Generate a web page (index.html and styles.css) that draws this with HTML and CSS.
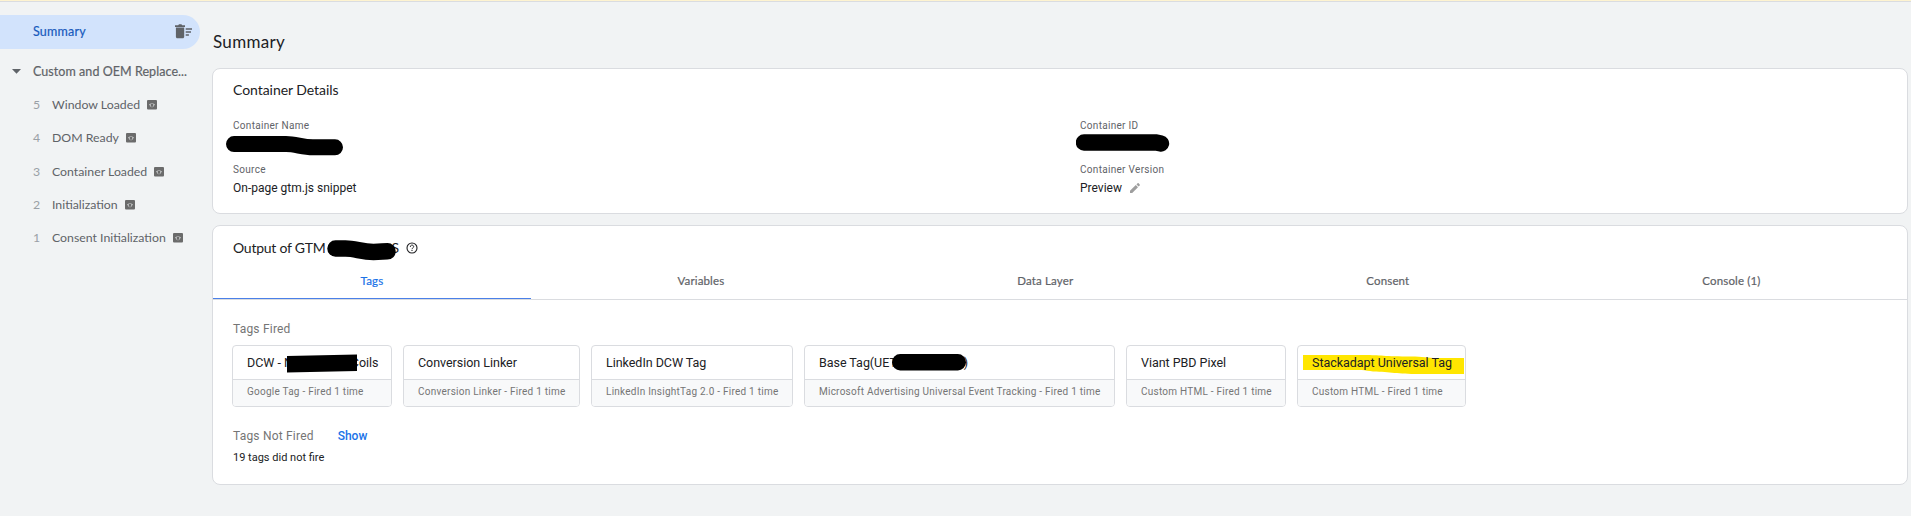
FILE: index.html
```
<!DOCTYPE html>
<html lang="en">
<head>
    <meta charset="UTF-8">
    <meta name="viewport" content="width=device-width, initial-scale=1.0">
    <title>Tag Assistant</title>
    <link rel="stylesheet" href="styles.css">
</head>
<body>
    <svg class="sprite" width="0" height="0">
        <symbol id="code" viewBox="0 0 10 10">
            <rect width="10" height="9.6" rx="1" fill="#6b6b6b"/>
            <path d="M4.3 3.3 2.6 5l1.7 1.7M5.7 3.3 7.4 5 5.7 6.7" fill="none" stroke="#f1f3f4" stroke-width="0.9"/>
        </symbol>
    </svg>

    <div class="topbar"></div>
    <div class="layout">
        <nav class="sidebar">
            <div class="summary-item">
                <span>Summary</span>
                <svg class="trash" width="18" height="15" viewBox="0 0 18 15">
                    <path d="M0 1.3h3.2L4 .3h2.4l.8 1H10v1.6H0zM.9 3.6h8.3v9.1c0 .9-.6 1.5-1.5 1.5H2.4c-.9 0-1.5-.6-1.5-1.5zM10.7 4.3h6.3v1.5h-6.3zM10.7 7.2h5.3v1.5h-5.3zM10.7 10.2h3.2v1.5h-3.2z" fill="#5f6368"/>
                </svg>
            </div>
            <div class="group">
                <svg class="caret" width="9" height="5" viewBox="0 0 9 5"><path d="M0 0h9L4.5 4.7z" fill="#5f6368"/></svg>
                <span>Custom and OEM Replace...</span>
            </div>
            <ul class="events">
                <li><span class="num">5</span><span class="label">Window Loaded</span><svg class="code"><use href="#code"/></svg></li>
                <li><span class="num">4</span><span class="label">DOM Ready</span><svg class="code"><use href="#code"/></svg></li>
                <li><span class="num">3</span><span class="label">Container Loaded</span><svg class="code"><use href="#code"/></svg></li>
                <li><span class="num">2</span><span class="label">Initialization</span><svg class="code"><use href="#code"/></svg></li>
                <li><span class="num">1</span><span class="label">Consent Initialization</span><svg class="code"><use href="#code"/></svg></li>
            </ul>
        </nav>

        <main class="content">
            <h1>Summary</h1>

            <section class="card details">
                <h2>Container Details</h2>
                <div class="fields">
                    <div class="field">
                        <div class="field-label">Container Name</div>
                        <div class="field-value">
                            <svg class="redact redact-name" width="117" height="20" viewBox="0 0 117 20"><path d="M8 8.1h52c10 0 16 3.2 27 3.2h22" fill="none" stroke="#000" stroke-width="16" stroke-linecap="round"/></svg>
                        </div>
                    </div>
                    <div class="field">
                        <div class="field-label">Container ID</div>
                        <div class="field-value">
                            <svg class="redact redact-id" width="94" height="18" viewBox="0 0 94 18"><path d="M8 8.5h72l5 1" fill="none" stroke="#000" stroke-width="16.4" stroke-linecap="round"/></svg>
                        </div>
                    </div>
                    <div class="field">
                        <div class="field-label">Source</div>
                        <div class="field-value">On-page gtm.js snippet</div>
                    </div>
                    <div class="field">
                        <div class="field-label">Container Version</div>
                        <div class="field-value">Preview
                            <svg class="pencil" width="10" height="10" viewBox="0 0 10 10"><path d="M0 7.8 5.8 2 8 4.2 2.2 10H0zM6.5 1.4 7.6.3c.3-.3.7-.3 1 0l1.1 1.1c.3.3.3.7 0 1L8.6 3.5z" fill="#9e9e9e"/></svg>
                        </div>
                    </div>
                </div>
            </section>

            <section class="card output">
                <h2 class="output-title">
                    <span class="output-name">Output of GTM</span>
                    <span class="hidden-id">S
                        <svg class="redact redact-gtm" width="70" height="21" viewBox="0 0 70 21"><path d="M8.5 8.5h10c10 0 16 3.4 28 3.4 8 0 9-.6 14-.6" fill="none" stroke="#000" stroke-width="16.5" stroke-linecap="round"/></svg>
                    </span>
                    <svg class="help" width="12" height="12" viewBox="0 0 12 12" fill="none" stroke="#202124">
                        <circle cx="6" cy="6" r="5" stroke-width="1.1"/>
                        <path d="M4.3 4.9C4.3 2.5 7.7 2.6 7.7 4.7 7.7 5.8 6 5.9 6 7.2" stroke-width="1"/>
                        <path d="M6 8v1.1" stroke-width="1.1"/>
                    </svg>
                </h2>

                <div class="tabs">
                    <div class="tab active">Tags</div>
                    <div class="tab">Variables</div>
                    <div class="tab">Data Layer</div>
                    <div class="tab">Consent</div>
                    <div class="tab">Console (1)</div>
                </div>

                <h3 class="fired-title">Tags Fired</h3>
                <div class="tag-list">
                    <div class="tag">
                        <div class="tag-name"><span>DCW - N</span><span class="tag-end">Coils</span>
                            <svg class="redact redact-dcw" width="71" height="19" viewBox="0 0 71 19"><path d="M0 2 70 .5V17L0 18.5z"/></svg>
                        </div>
                        <div class="tag-info">Google Tag - Fired 1 time</div>
                    </div>
                    <div class="tag">
                        <div class="tag-name">Conversion Linker</div>
                        <div class="tag-info">Conversion Linker - Fired 1 time</div>
                    </div>
                    <div class="tag">
                        <div class="tag-name">LinkedIn DCW Tag</div>
                        <div class="tag-info">LinkedIn InsightTag 2.0 - Fired 1 time</div>
                    </div>
                    <div class="tag">
                        <div class="tag-name"><span>Base Tag(UET</span><span class="paren">)</span>
                            <svg class="redact redact-uet" width="75" height="17" viewBox="0 0 75 17"><rect width="74" height="16.4" rx="8.2"/></svg>
                        </div>
                        <div class="tag-info">Microsoft Advertising Universal Event Tracking - Fired 1 time</div>
                    </div>
                    <div class="tag">
                        <div class="tag-name">Viant PBD Pixel</div>
                        <div class="tag-info">Custom HTML - Fired 1 time</div>
                    </div>
                    <div class="tag">
                        <div class="tag-name">
                            <svg class="marker" width="162" height="20" viewBox="0 0 162 20"><path d="M0 1h62c14 0 20 1.5 46 1.5 12 0 16 1.5 26 1.5h27v16h-45c-22 0-28-2-46-2.500-8-1.500-14-1.500-24-1.500H0z" fill="#ffe600"/></svg>
                            <span class="marked">Stackadapt Universal Tag</span>
                        </div>
                        <div class="tag-info">Custom HTML - Fired 1 time</div>
                    </div>
                </div>

                <div class="not-fired">
                    <h3>Tags Not Fired</h3>
                    <a class="show">Show</a>
                </div>
                <p class="count">19 tags did not fire</p>
            </section>
        </main>
    </div>
</body>
</html>
```
FILE: styles.css
```
* {
    margin: 0;
    padding: 0;
    box-sizing: border-box;
}

body {
    font-family: Roboto, "Liberation Sans", sans-serif;
    font-size: 12px;
    color: #202124;
    background: #f1f3f4;
    height: 516px;
    overflow: hidden;
}

.sprite {
    position: absolute;
}

.topbar {
    height: 2px;
    background: #fef3d0;
    border-bottom: 1px solid #dadce0;
}

.layout {
    display: flex;
}

/* Sidebar */
.sidebar {
    width: 212px;
    padding-top: 13px;
    color: #5f6368;
    font-family: Lato, Roboto, sans-serif;
    font-weight: 400;
}

.summary-item {
    display: flex;
    align-items: center;
    justify-content: space-between;
    width: 200px;
    height: 34px;
    padding: 0 7px 2px 33px;
    background: #d2e3fc;
    border-radius: 0 17px 17px 0;
    color: #185abc;
    font-size: 12.5px;
    -webkit-text-stroke: 0.2px;
    letter-spacing: 0.2px;
}

.group {
    display: flex;
    align-items: center;
    gap: 12px;
    height: 34px;
    margin-top: 5px;
    padding-left: 12px;
    font-size: 12.5px;
    letter-spacing: 0.06px;
    -webkit-text-stroke: 0.2px;
    white-space: nowrap;
}

.events {
    list-style: none;
}

.events li {
    display: flex;
    align-items: center;
    height: 33.25px;
    padding-left: 33px;
    font-size: 12.3px;
    white-space: nowrap;
}

.num {
    width: 19px;
    color: #9aa0a6;
}

.code {
    width: 10px;
    height: 10px;
    margin: 1px 0 0 7px;
}

/* Main column */
.content {
    flex: 1;
    padding-right: 3px;
}

h1 {
    height: 66px;
    padding: 30px 0 0 1px;
    font: 400 17px/20px Lato, Roboto, sans-serif;
    letter-spacing: 0.3px;
}

h2 {
    font: 400 14px/20px Lato, Roboto, sans-serif;
    letter-spacing: -0.05px;
}

h3 {
    font-size: 12px;
    font-weight: 400;
    line-height: 16px;
    color: #757575;
    letter-spacing: 0.2px;
}

.card {
    background: #fff;
    border: 1px solid #dadce0;
    border-radius: 8px;
}

.redact {
    position: absolute;
}

.details {
    height: 146px;
    padding: 11px 20px 0;
}

.fields {
    display: grid;
    grid-template-columns: 847px 1fr;
    grid-auto-rows: 44px;
    margin-top: 18px;
}

.field-label {
    font-size: 10px;
    line-height: 16px;
    letter-spacing: 0.3px;
    color: #5f6368;
}

.field-value {
    position: relative;
    display: flex;
    align-items: center;
    gap: 8px;
    height: 20px;
    font-size: 12px;
}

.redact-name {
    left: -7px;
    top: 2px;
}

.redact-id {
    left: -4px;
    top: 0;
}

/* Output card */
.output {
    height: 260px;
    margin-top: 11px;
}

.output-title {
    display: flex;
    align-items: center;
    padding: 12px 20px 0;
}

.output-name {
    width: 92px;
    white-space: nowrap;
    letter-spacing: -0.25px;
}

.hidden-id {
    position: relative;
    width: 74px;
    height: 20px;
    text-align: right;
}

.redact-gtm {
    left: 2px;
    top: 2px;
}

.help {
    margin-left: 7px;
}

.tabs {
    display: flex;
    height: 42px;
    border-bottom: 1px solid #dadce0;
    font: 400 11.5px/46px Lato, Roboto, sans-serif;
    color: #5f6368;
}

.tab {
    flex: 1 1 auto;
    height: 41px;
    text-align: center;
    line-height: 46px;
    letter-spacing: 0.15px;
    -webkit-text-stroke: 0.2px;
}

.tab.active {
    flex-basis: 25px;
    color: #1a73e8;
    border-bottom: 1px solid #4a80e8;
}

.fired-title {
    padding: 21px 20px 0;
}

.tag-list {
    display: flex;
    gap: 11px;
    margin: 8px 19px 0;
}

.tag {
    width: 160px;
    height: 62px;
    border: 1px solid #dadce0;
    border-radius: 4px;
    overflow: hidden;
    white-space: nowrap;
}

.tag:nth-child(2) {
    width: 177px;
}

.tag:nth-child(3) {
    width: 202px;
}

.tag:nth-child(4) {
    width: 311px;
}

.tag:nth-child(6) {
    width: 169px;
}

.tag-name {
    position: relative;
    height: 34px;
    padding-left: 14px;
    line-height: 34px;
    font-size: 12.5px;
    letter-spacing: -0.03px;
    border-bottom: 1px solid #dadce0;
}

.tag-info {
    height: 27px;
    padding-left: 14px;
    line-height: 24px;
    font-size: 10px;
    letter-spacing: 0.24px;
    color: #757575;
    background: #f8f9fa;
}

.tag-end {
    margin-left: 58px;
}

.paren {
    margin-left: 67px;
}

.redact-dcw {
    left: 54px;
    top: 8px;
}

.redact-uet {
    left: 87px;
    top: 8px;
}

.marker {
    position: absolute;
    left: 5px;
    top: 8px;
}

.marked {
    position: relative;
}

.not-fired {
    display: flex;
    gap: 24px;
    padding: 21px 20px 0;
}

.show {
    font-size: 12px;
    line-height: 16px;
    font-weight: 500;
    color: #1a73e8;
}

.count {
    padding: 6px 20px 0;
    font-size: 11px;
    line-height: 16px;
}
```
